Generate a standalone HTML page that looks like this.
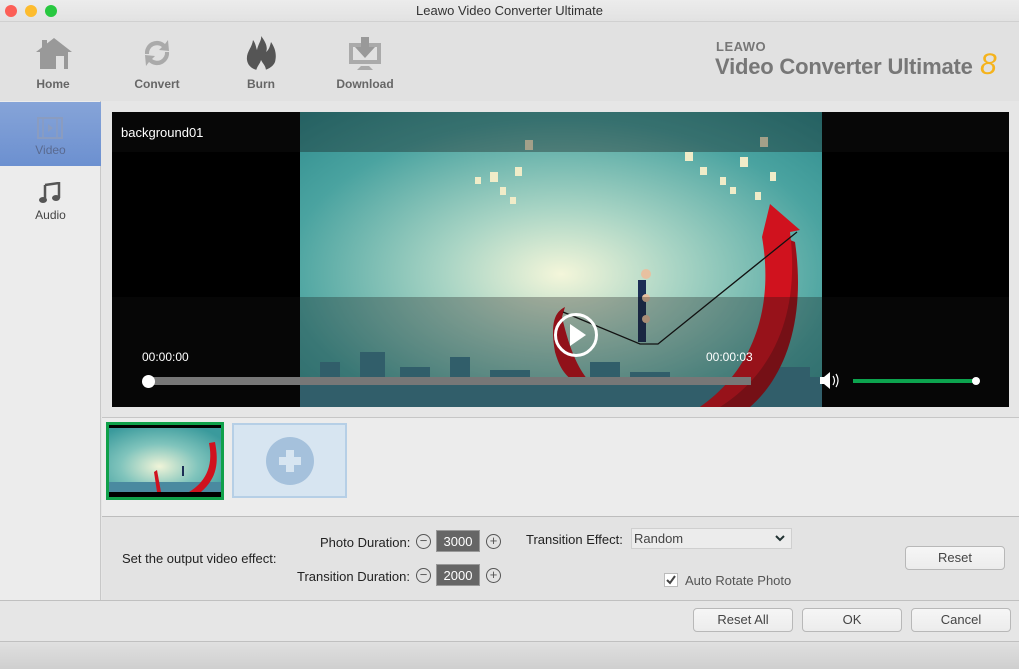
<!DOCTYPE html>
<html><head><meta charset="utf-8"><style>
*{margin:0;padding:0;box-sizing:border-box}
body{width:1019px;height:669px;overflow:hidden;font-family:"Liberation Sans",Arial,sans-serif;background:#e6e6e6;position:relative}
.a{position:absolute}
.title{left:0;top:0;width:1019px;height:22px;background:linear-gradient(#ececec,#e2e2e2);text-align:center;font-size:13px;line-height:22px;color:#333;border-bottom:1px solid #d0d0d0}
.dot{top:5px;width:12px;height:12px;border-radius:50%}
.tb{left:0;top:22px;width:1019px;height:79px;background:#e1e1e1}
.tl{font-size:12px;font-weight:bold;color:#666;text-align:center;width:80px;top:77px}
.side{left:0;top:101px;width:101px;height:499px;background:#ececec;border-right:1px solid #c8c8c8}
.btn{height:24px;border:1px solid #b8b8b8;border-radius:4px;background:linear-gradient(#f6f6f6,#ececec);font-size:13px;color:#444;text-align:center;line-height:22px}
.lbl{font-size:13px;color:#222}
.num{width:44px;height:22px;background:#666;color:#fff;font-size:13px;text-align:center;line-height:22px;border:1px solid #999}
.circ{width:15px;height:15px;border:1.5px solid #555;border-radius:50%;font-size:13px;line-height:11px;text-align:center;color:#555}
</style></head><body>
<div class="a title">Leawo Video Converter Ultimate</div>
<div class="a dot" style="left:5px;background:#fc5f57"></div>
<div class="a dot" style="left:25px;background:#fdbc2e"></div>
<div class="a dot" style="left:45px;background:#28c840"></div>
<div class="a tb"></div>
<!-- toolbar icons -->
<svg class="a" style="left:34px;top:36px" width="40" height="34" viewBox="0 0 40 34"><path d="M20 2 L38 16 L34 16 L34 33 L6 33 L6 16 L2 16 Z" fill="#999"/><rect x="22" y="20" width="8" height="13" fill="#e1e1e1"/><rect x="8" y="4" width="5" height="8" fill="#999"/></svg>
<svg class="a" style="left:141px;top:36px" width="32" height="34" viewBox="0 0 32 34"><path d="M4 18 A12 12 0 0 1 24 8 L27 4 L28 15 L18 14 L21 11 A8 8 0 0 0 8 18 Z" fill="#aaa"/><path d="M28 16 A12 12 0 0 1 8 26 L5 30 L4 19 L14 20 L11 23 A8 8 0 0 0 24 16 Z" fill="#aaa"/></svg>
<svg class="a" style="left:244px;top:36px" width="34" height="36" viewBox="0 0 34 36"><path d="M3 24 C2 16 8 12 9 4 C12 8 12 12 13 14 C14 8 18 4 17 0 C22 6 24 12 22 16 C25 14 26 10 27 6 C31 12 33 18 31 26 C29 31 23 34 17 35 C10 34 4 31 3 24 Z" fill="#555"/><path d="M12 35 C13 30 16 28 17 24 C19 28 22 30 22 35 Z" fill="#e1e1e1"/></svg>
<svg class="a" style="left:348px;top:36px" width="34" height="36" viewBox="0 0 34 36"><rect x="1" y="7" width="32" height="21" fill="#aaa"/><rect x="5" y="11" width="24" height="13" fill="#e1e1e1"/><path d="M13 1 h8 v10 h6 l-10 11 l-10 -11 h6 Z" fill="#999"/><path d="M9 34 h16 l-4 -4 h-8 Z" fill="#aaa"/></svg>
<div class="a tl" style="left:13px">Home</div>
<div class="a tl" style="left:117px">Convert</div>
<div class="a tl" style="left:221px">Burn</div>
<div class="a tl" style="left:325px">Download</div>
<div class="a" style="left:716px;top:39px;font-size:13px;font-weight:bold;color:#777;letter-spacing:0.5px">LEAWO</div>
<div class="a" style="left:715px;top:54px;font-size:22px;font-weight:bold;color:#777;letter-spacing:-0.2px">Video Converter Ultimate</div>
<div class="a" style="left:980px;top:48px;font-size:30px;color:#f5b31c;font-style:italic">8</div>
<!-- sidebar -->
<div class="a side"></div>
<div class="a" style="left:0;top:102px;width:101px;height:64px;background:linear-gradient(#86a4d8,#6c90d0)"></div>
<svg class="a" style="left:37px;top:117px" width="26" height="22" viewBox="0 0 26 22"><rect x="1" y="1" width="24" height="20" fill="none" stroke="#8a9cc0" stroke-width="2"/><line x1="6" y1="1" x2="6" y2="21" stroke="#8a9cc0" stroke-width="1.5"/><line x1="20" y1="1" x2="20" y2="21" stroke="#8a9cc0" stroke-width="1.5"/><path d="M11 7 L16 11 L11 15 Z" fill="#8a9cc0"/></svg>
<div class="a" style="left:0;top:143px;width:101px;text-align:center;font-size:12px;color:#5a6a90">Video</div>
<svg class="a" style="left:39px;top:182px" width="22" height="22" viewBox="0 0 22 22"><path d="M6 3 L20 1 L20 16" fill="none" stroke="#555" stroke-width="2.5"/><line x1="6" y1="3" x2="6" y2="18" stroke="#555" stroke-width="2.5"/><ellipse cx="4" cy="18" rx="4" ry="3" fill="#555"/><ellipse cx="17" cy="16" rx="4" ry="3" fill="#555"/></svg>
<div class="a" style="left:0;top:208px;width:101px;text-align:center;font-size:12px;color:#444">Audio</div>
<!-- video -->
<div class="a" style="left:112px;top:112px;width:897px;height:295px;background:#000"></div>
<svg class="a" style="left:300px;top:112px" width="522" height="295" viewBox="0 0 522 295">
<defs><radialGradient id="g" cx="0.5" cy="0.55" r="0.75"><stop offset="0" stop-color="#f4f6da"/><stop offset="0.3" stop-color="#a8d4c4"/><stop offset="0.7" stop-color="#4aa3a0"/><stop offset="1" stop-color="#2d8a8c"/></radialGradient></defs>
<rect width="522" height="295" fill="url(#g)"/>
<g fill="#3e7e90"><rect x="20" y="250" width="20" height="45"/><rect x="60" y="240" width="25" height="55"/><rect x="100" y="255" width="30" height="40"/><rect x="150" y="245" width="20" height="50"/><rect x="190" y="258" width="40" height="37"/><rect x="290" y="250" width="30" height="45"/><rect x="330" y="260" width="40" height="35"/><rect x="470" y="255" width="40" height="40"/><rect x="0" y="265" width="522" height="30"/></g>
<path d="M470 120 C480 200 450 260 400 295 L450 295 C490 260 505 200 495 130 Z" fill="#a00f18"/>
<path d="M462 125 L470 92 L500 118 L490 120 C500 200 475 260 420 295 L400 295 C450 260 475 200 462 125 Z" fill="#d0121e"/>
<path d="M255 240 C250 210 255 200 265 195 L262 205 C270 240 280 260 290 270 L275 270 C262 262 258 250 255 240 Z" fill="#c8101c"/>
<path d="M263 200 L340 232 L358 232 L497 120" fill="none" stroke="#111" stroke-width="1.3"/>
<g fill="#1c2e55"><rect x="338" y="168" width="8" height="62"/><circle cx="346" cy="162" r="5" fill="#e8c0a0"/><circle cx="346" cy="186" r="4" fill="#e8c0a0"/><circle cx="346" cy="207" r="4" fill="#e8c0a0"/></g>
<g fill="#f0ecc8"><rect x="190" y="60" width="8" height="10"/><rect x="200" y="75" width="6" height="8"/><rect x="215" y="55" width="7" height="9"/><rect x="225" y="28" width="8" height="10"/><rect x="210" y="85" width="6" height="7"/><rect x="175" y="65" width="6" height="7"/><rect x="385" y="40" width="8" height="9"/><rect x="400" y="55" width="7" height="8"/><rect x="420" y="65" width="6" height="8"/><rect x="440" y="45" width="8" height="10"/><rect x="460" y="25" width="8" height="10"/><rect x="470" y="60" width="6" height="9"/><rect x="430" y="75" width="6" height="7"/><rect x="455" y="80" width="6" height="8"/></g>
</svg>
<div class="a" style="left:112px;top:112px;width:897px;height:40px;background:rgba(20,20,20,0.35)"></div>
<div class="a" style="left:112px;top:297px;width:897px;height:110px;background:rgba(20,20,20,0.3)"></div>
<div class="a" style="left:121px;top:125px;color:#fff;font-size:13px">background01</div>
<div class="a" style="left:142px;top:350px;color:#fff;font-size:12px">00:00:00</div>
<div class="a" style="left:706px;top:350px;color:#fff;font-size:12px">00:00:03</div>
<svg class="a" style="left:553px;top:312px" width="46" height="46" viewBox="0 0 46 46"><circle cx="23" cy="23" r="20.5" fill="none" stroke="#fff" stroke-width="3"/><path d="M17 12 L33 23 L17 34 Z" fill="#fff"/></svg>
<div class="a" style="left:148px;top:377px;width:603px;height:8px;background:#777"></div>
<div class="a" style="left:142px;top:375px;width:13px;height:13px;border-radius:50%;background:#fff"></div>
<svg class="a" style="left:819px;top:372px" width="24" height="17" viewBox="0 0 24 17"><path d="M1 5 H5 L11 0 V17 L5 12 H1 Z" fill="#fff"/><path d="M14 4 Q17 8.5 14 13 M17 2 Q21 8.5 17 15" fill="none" stroke="#fff" stroke-width="1.2"/></svg>
<div class="a" style="left:853px;top:379px;width:123px;height:4px;background:#0ca34e"></div>
<div class="a" style="left:972px;top:377px;width:8px;height:8px;border-radius:50%;background:#fff"></div>
<!-- thumbnails -->
<div class="a" style="left:102px;top:417px;width:917px;height:1px;background:#c6c6c6"></div>
<div class="a" style="left:102px;top:418px;width:917px;height:98px;background:#ececec"></div>
<div class="a" style="left:106px;top:422px;width:118px;height:78px;border:3px solid #10a14a;background:#000"></div>
<svg class="a" style="left:109px;top:428px" width="112" height="64" viewBox="0 0 112 64"><defs><radialGradient id="h" cx="0.45" cy="0.6" r="0.7"><stop offset="0" stop-color="#f0f4d8"/><stop offset="0.5" stop-color="#80c4bc"/><stop offset="1" stop-color="#3a9a9c"/></radialGradient></defs><rect width="112" height="64" fill="url(#h)"/><rect y="54" width="112" height="10" fill="#4a8aa0"/><path d="M100 15 C105 40 95 55 80 64 L92 64 C108 50 110 35 106 14 Z" fill="#d0121e"/><path d="M45 44 L48 64 L52 64 L48 42 Z" fill="#d0121e"/><rect x="73" y="38" width="2" height="10" fill="#1c2e55"/></svg>
<div class="a" style="left:232px;top:423px;width:115px;height:75px;background:#d7e5f1;border:2px solid #b6cfe6"></div>
<div class="a" style="left:266px;top:437px;width:48px;height:48px;border-radius:50%;background:#a5c1dc"></div>
<div class="a" style="left:281px;top:450px;width:18px;height:22px;background:#d7e5f1;left:286px;width:8px"></div>
<div class="a" style="left:279px;top:457px;width:22px;height:8px;background:#d7e5f1"></div>
<!-- settings -->
<div class="a" style="left:102px;top:516px;width:917px;height:1px;background:#bdbdbd"></div>
<div class="a" style="left:102px;top:517px;width:917px;height:83px;background:#e3e3e3"></div>
<div class="a lbl" style="left:122px;top:551px">Set the output video effect:</div>
<div class="a lbl" style="left:320px;top:535px">Photo Duration:</div>
<div class="a lbl" style="left:297px;top:569px">Transition Duration:</div>
<div class="a circ" style="left:416px;top:534px">−</div>
<div class="a num" style="left:436px;top:530px">3000</div>
<div class="a circ" style="left:486px;top:534px">+</div>
<div class="a circ" style="left:416px;top:568px">−</div>
<div class="a num" style="left:436px;top:564px">2000</div>
<div class="a circ" style="left:486px;top:568px">+</div>
<div class="a lbl" style="left:526px;top:532px">Transition Effect:</div>
<div class="a" style="left:631px;top:528px;width:161px;height:21px;background:#ececec;border:1px solid #cfcfcf;font-size:13px;color:#444;padding-left:2px;line-height:19px">Random</div>
<svg class="a" style="left:775px;top:535px" width="10" height="8" viewBox="0 0 10 8"><path d="M1 1 L5 5 L9 1" fill="none" stroke="#233" stroke-width="2"/></svg>
<div class="a" style="left:664px;top:573px;width:14px;height:14px;background:#fff;border:1px solid #bbb"></div>
<svg class="a" style="left:665px;top:574px" width="12" height="12" viewBox="0 0 12 12"><path d="M2 6 L5 9 L10 2" fill="none" stroke="#444" stroke-width="2"/></svg>
<div class="a" style="left:685px;top:573px;font-size:13px;color:#555">Auto Rotate Photo</div>
<div class="a btn" style="left:905px;top:546px;width:100px">Reset</div>
<div class="a" style="left:0;top:600px;width:1019px;height:1px;background:#c0c0c0"></div>
<div class="a" style="left:0;top:601px;width:1019px;height:40px;background:#e6e6e6"></div>
<div class="a btn" style="left:693px;top:608px;width:100px">Reset All</div>
<div class="a btn" style="left:802px;top:608px;width:100px">OK</div>
<div class="a btn" style="left:911px;top:608px;width:100px">Cancel</div>
<div class="a" style="left:0;top:641px;width:1019px;height:1px;background:#c0c0c0"></div>
<div class="a" style="left:0;top:642px;width:1019px;height:27px;background:linear-gradient(#e0e0e0,#cfcfcf)"></div>
</body></html>
